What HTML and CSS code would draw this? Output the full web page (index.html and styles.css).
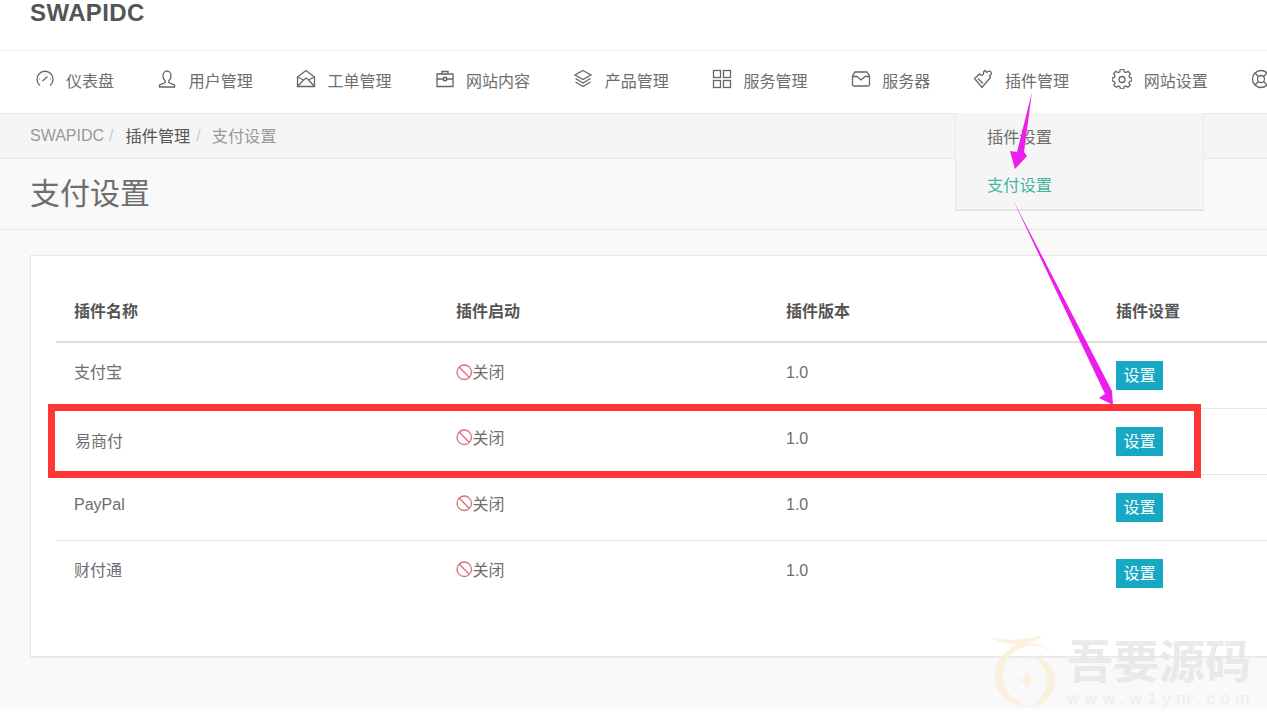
FILE: index.html
```html
<!DOCTYPE html>
<html lang="zh-CN">
<head>
    <meta charset="UTF-8">
    <title>支付设置</title>
    <link rel="stylesheet" href="styles.css">
</head>
<body>
    <div class="page">
        <div class="header">
            <div class="logo">SWAPIDC</div>
        </div>

        <ul class="nav">
            <li class="nav-item">
                <svg class="nav-icon" viewBox="0 0 20 20"><path d="M5 16.500A8 8 0 1 1 15 16.500"/><path d="M7.500 12l5-4.500"/><path d="M10 5v.5M4.500 10H5M15 10h.5"/></svg>
                <a>仪表盘</a>
            </li>
            <li class="nav-item">
                <svg class="nav-icon" viewBox="0 0 20 20"><path d="M6 6.500a4 4.500 0 0 1 8 0c0 2.500-1 4.500-2.200 5.500v1.500l5.700 2.500v2h-15v-2l5.700-2.500V12C7 11 6 9 6 6.500z"/></svg>
                <a>用户管理</a>
            </li>
            <li class="nav-item">
                <svg class="nav-icon" viewBox="0 0 20 20"><path d="M1.500 8L10 1.500 18.500 8v9.500h-17z"/><path d="M1.500 17.500L7.500 11l2.500-2 2.500 2 6 6.500"/><path d="M1.500 8l6 3M18.500 8l-6 3"/></svg>
                <a>工单管理</a>
            </li>
            <li class="nav-item">
                <svg class="nav-icon" viewBox="0 0 20 20"><path d="M2 5h16v12.500H2z"/><path d="M7 5V2.500h6V5"/><path d="M2 10h6M12 10h6"/><path d="M8.500 8.500h3v3h-3z"/></svg>
                <a>网站内容</a>
            </li>
            <li class="nav-item">
                <svg class="nav-icon" viewBox="0 0 20 20"><path d="M10 1.500L18 6l-8 4.500L2 6z"/><path d="M2.500 9.500l7.500 4.500 7.500-4.500"/><path d="M2.500 13l7.500 4.500 7.500-4.500"/></svg>
                <a>产品管理</a>
            </li>
            <li class="nav-item">
                <svg class="nav-icon" viewBox="0 0 20 20"><rect x="1.500" y="1.500" width="7" height="7"/><rect x="11.500" y="1.500" width="7" height="7"/><rect x="1.500" y="11.500" width="7" height="7"/><rect x="11.500" y="11.500" width="7" height="7"/></svg>
                <a>服务管理</a>
            </li>
            <li class="nav-item">
                <svg class="nav-icon" viewBox="0 0 20 20"><path d="M4 3h12l2.500 4v8.500a1.500 1.500 0 0 1-1.500 1.500H3a1.500 1.500 0 0 1-1.500-1.500V7z"/><path d="M1.500 7.500H6L10 11l4-3.500h4.500"/></svg>
                <a>服务器</a>
            </li>
            <li class="nav-item">
                <svg class="nav-icon" viewBox="0 0 20 20"><path d="M1.500 9.500L6.500 5C7.500 6 9 6.500 10 5.500 11 4.500 10.500 3 10.500 3L12 1.500 14 3.500C15 2 17 1.500 18 3 19 4.500 18 6 16.500 6.500L17.500 8.500 9 18.500z"/><path d="M5 9.500l5 5"/></svg>
                <a>插件管理</a>
                <div class="dropdown">
                    <a class="dropdown-link">插件设置</a>
                    <a class="dropdown-link active">支付设置</a>
                </div>
            </li>
            <li class="nav-item">
                <svg class="nav-icon" viewBox="0 0 20 20"><path d="M8.300 1.500h3.400l.5 2.500 1.700.8 2.200-1.300 2.300 2.500-1.400 2 .6 1.800 2.200.5v3.200l-2.200.5-.7 1.800 1.300 2-2.400 2.300-2-1.300-1.700.7-.5 2.200H8.300" transform="translate(0 -1) scale(1 .96)"/><path d="M8.300 1.500l-.5 2.500-1.700.8-2.200-1.300L1.600 6l1.400 2-.6 1.800-2.200.5v3.200l2.200.5.700 1.800-1.300 2 2.400 2.300 2-1.300 1.700.7.500 2.200" transform="translate(0 -1) scale(1 .96)"/><circle cx="10" cy="10.500" r="3"/></svg>
                <a>网站设置</a>
            </li>
            <li class="nav-item">
                <svg class="nav-icon" viewBox="0 0 20 20"><circle cx="10" cy="10" r="8.500"/><circle cx="10" cy="10" r="3.500"/><path d="M4 4l3.500 3.500M16 4l-3.500 3.500M4 16l3.500-3.500M16 16l-3.500-3.500"/></svg>
            </li>
        </ul>

        <div class="breadcrumb">
            <a class="crumb">SWAPIDC</a>
            <span class="crumb-sep">/</span>
            <a class="crumb crumb-cn crumb-dark">插件管理</a>
            <span class="crumb-sep">/</span>
            <span class="crumb crumb-cn">支付设置</span>
        </div>

        <div class="page-title">
            <h1>支付设置</h1>
        </div>

        <div class="content">
            <div class="panel">
                <table class="plugin-table">
                    <thead>
                        <tr>
                            <th class="col-name">插件名称</th>
                            <th class="col-state">插件启动</th>
                            <th class="col-version">插件版本</th>
                            <th>插件设置</th>
                        </tr>
                    </thead>
                    <tbody>
                        <tr>
                            <td>支付宝</td>
                            <td><svg class="off-icon" viewBox="0 0 16 16"><circle cx="8" cy="8" r="7"/><path d="M3 3l10 10"/></svg>关闭</td>
                            <td>1.0</td>
                            <td><a class="btn-set">设置</a></td>
                        </tr>
                        <tr>
                            <td><span class="edited-text">易商付</span></td>
                            <td><svg class="off-icon" viewBox="0 0 16 16"><circle cx="8" cy="8" r="7"/><path d="M3 3l10 10"/></svg>关闭</td>
                            <td>1.0</td>
                            <td><a class="btn-set">设置</a></td>
                        </tr>
                        <tr>
                            <td>PayPal</td>
                            <td><svg class="off-icon" viewBox="0 0 16 16"><circle cx="8" cy="8" r="7"/><path d="M3 3l10 10"/></svg>关闭</td>
                            <td>1.0</td>
                            <td><a class="btn-set">设置</a></td>
                        </tr>
                        <tr>
                            <td>财付通</td>
                            <td><svg class="off-icon" viewBox="0 0 16 16"><circle cx="8" cy="8" r="7"/><path d="M3 3l10 10"/></svg>关闭</td>
                            <td>1.0</td>
                            <td><a class="btn-set">设置</a></td>
                        </tr>
                    </tbody>
                </table>
            </div>
        </div>

        <!-- annotations on top of the screenshot -->
        <svg class="arrows" viewBox="0 0 1267 715">
            <path d="M1032 92L1024 152 1027 156 1015 169 1010 151 1017 152z"/>
            <path d="M1013 200L1112 391 1113 405 1099 398 1105 394z"/>
        </svg>
        <div class="red-box"></div>

        <div class="watermark">
            <svg class="wm-logo" viewBox="0 0 66 74">
                <path d="M0 2C15 6 35 6 52 0 49 5 42 8 34 9 22 10 9 8 0 2z"/>
                <path d="M25 10C10 20 5 30 5 42 5 58 18 70 40 72 22 66 12 54 13 42 13 28 20 16 33 12 45 9 58 12 64 20 60 12 45 5 25 10z"/>
                <path d="M38 20C52 20 65 32 65 46 65 60 55 70 40 72 50 66 57 56 57 46 57 34 50 24 38 20z"/>
                <path d="M37 36C38 42 40 44 46 45 40 46 38 48 37 54 36 48 34 46 28 45 34 44 36 42 37 36z"/>
            </svg>
            <div class="wm-text">
                <div class="wm-name">吾要源码</div>
                <div class="wm-url">www.w1ym.com</div>
            </div>
        </div>
    </div>
</body>
</html>
```

FILE: styles.css
```css
* {
    box-sizing: border-box;
}

html, body {
    margin: 0;
    padding: 0;
    background: #fff;
}

body {
    font-family: "Liberation Sans", "Noto Sans CJK SC", sans-serif;
    font-size: 16px;
    color: #666;
}

.page {
    position: relative;
    width: 1267px;
    height: 715px;
    overflow: hidden;
}

.header {
    height: 51px;
    padding-left: 30px;
    border-bottom: 1px solid #eee;
}

.logo {
    font-size: 24px;
    font-weight: bold;
    line-height: 25px;
    letter-spacing: 0.4px;
    color: #555;
}

.nav {
    display: flex;
    gap: 43.2px;
    height: 63px;
    margin: 0;
    padding: 0 0 0 34.5px;
    list-style: none;
    border-bottom: 1px solid #e7e7e7;
    white-space: nowrap;
}

.nav-item {
    position: relative;
    display: flex;
    align-items: center;
    color: #6e6e6e;
    padding-bottom: 4px;
}

.nav-icon {
    flex: none;
    width: 20px;
    height: 20px;
    margin: -2px 11.5px 0 0;
    fill: none;
    stroke: #666;
    stroke-width: 1.3;
}

.dropdown {
    position: absolute;
    top: 62px;
    left: -18.5px;
    width: 249px;
    height: 98px;
    padding: 0 0 0 31px;
    background: #f5f5f5;
    border: 1px solid #e9e9e9;
    border-top: none;
    border-bottom: 2px solid #e5e5e5;
    font-size: 16.3px;
}

.dropdown-link {
    display: block;
    height: 48px;
    line-height: 48px;
    color: #6e6e6e;
}

.dropdown-link.active {
    color: #45b59e;
}

.breadcrumb {
    display: flex;
    align-items: center;
    height: 45px;
    padding-left: 30px;
    background: #f5f5f5;
    border-bottom: 1px solid #e7e7e7;
}

.crumb {
    color: #999;
}

.crumb-cn {
    margin-top: -2px;
    font-size: 16.2px;
}

.crumb-dark {
    color: #555;
}

.crumb-sep {
    margin: 0 12px 0 5px;
    color: #ccc;
}

.crumb-dark + .crumb-sep {
    margin: 0 11px 0 6px;
}

.page-title {
    height: 71px;
    padding-left: 30px;
    background: #f9f9f9;
    border-bottom: 1px solid #e7e7e7;
}

.page-title h1 {
    margin: 0;
    font-size: 30px;
    font-weight: normal;
    line-height: 70px;
    color: #6e6e6e;
}

.content {
    height: 479px;
    padding: 25px 0 0 30px;
    background: #f9f9f9;
}

.panel {
    width: 1300px;
    height: 402px;
    padding: 26px 0 0 25px;
    background: #fff;
    border: 1px solid #e7e7e7;
    box-shadow: 0 1px 2px rgba(0,0,0,0.05);
}

.plugin-table {
    width: 1250px;
    border-collapse: collapse;
    table-layout: fixed;
}

.plugin-table th {
    height: 60px;
    padding: 0 0 4px 18px;
    text-align: left;
    font-weight: bold;
    color: #555;
    border-bottom: 2px solid #ddd;
}

.col-name {
    width: 382px;
}

.col-state,
.col-version {
    width: 330px;
}

.plugin-table td {
    height: 66px;
    padding: 18px 0 0 18px;
    vertical-align: top;
    line-height: 24px;
    color: #6e6e6e;
    border-bottom: 1px solid #e7e7e7;
}

.plugin-table tr:last-child td {
    border-bottom: none;
}

.edited-text {
    display: inline-block;
    margin: 3px 0 0 1px;
}

.off-icon {
    width: 16.500px;
    height: 16.500px;
    vertical-align: -2px;
    fill: none;
    stroke: #d9707e;
    stroke-width: 1.300;
}

.btn-set {
    display: inline-block;
    width: 47px;
    height: 29px;
    text-align: center;
    line-height: 29px;
    color: #fff;
    background: #17a8c4;
}

.red-box {
    position: absolute;
    left: 48px;
    top: 404px;
    width: 1153px;
    height: 74px;
    border: 7px solid #ff3636;
}

.arrows {
    position: absolute;
    left: 0;
    top: 0;
    width: 1267px;
    height: 715px;
    fill: #ea1fee;
}

.watermark {
    position: absolute;
    left: 990px;
    top: 635px;
    display: flex;
    gap: 11px;
    opacity: 0.8;
}

.wm-logo {
    flex: none;
    width: 66px;
    height: 74px;
    fill: #fbeed6;
}

.wm-name {
    font-weight: bold;
    font-size: 46px;
    line-height: 54px;
    color: #e6e6e6;
    white-space: nowrap;
}

.wm-url {
    font-size: 17px;
    line-height: 19px;
    letter-spacing: 5.5px;
    color: #ebebeb;
    white-space: nowrap;
}
```
